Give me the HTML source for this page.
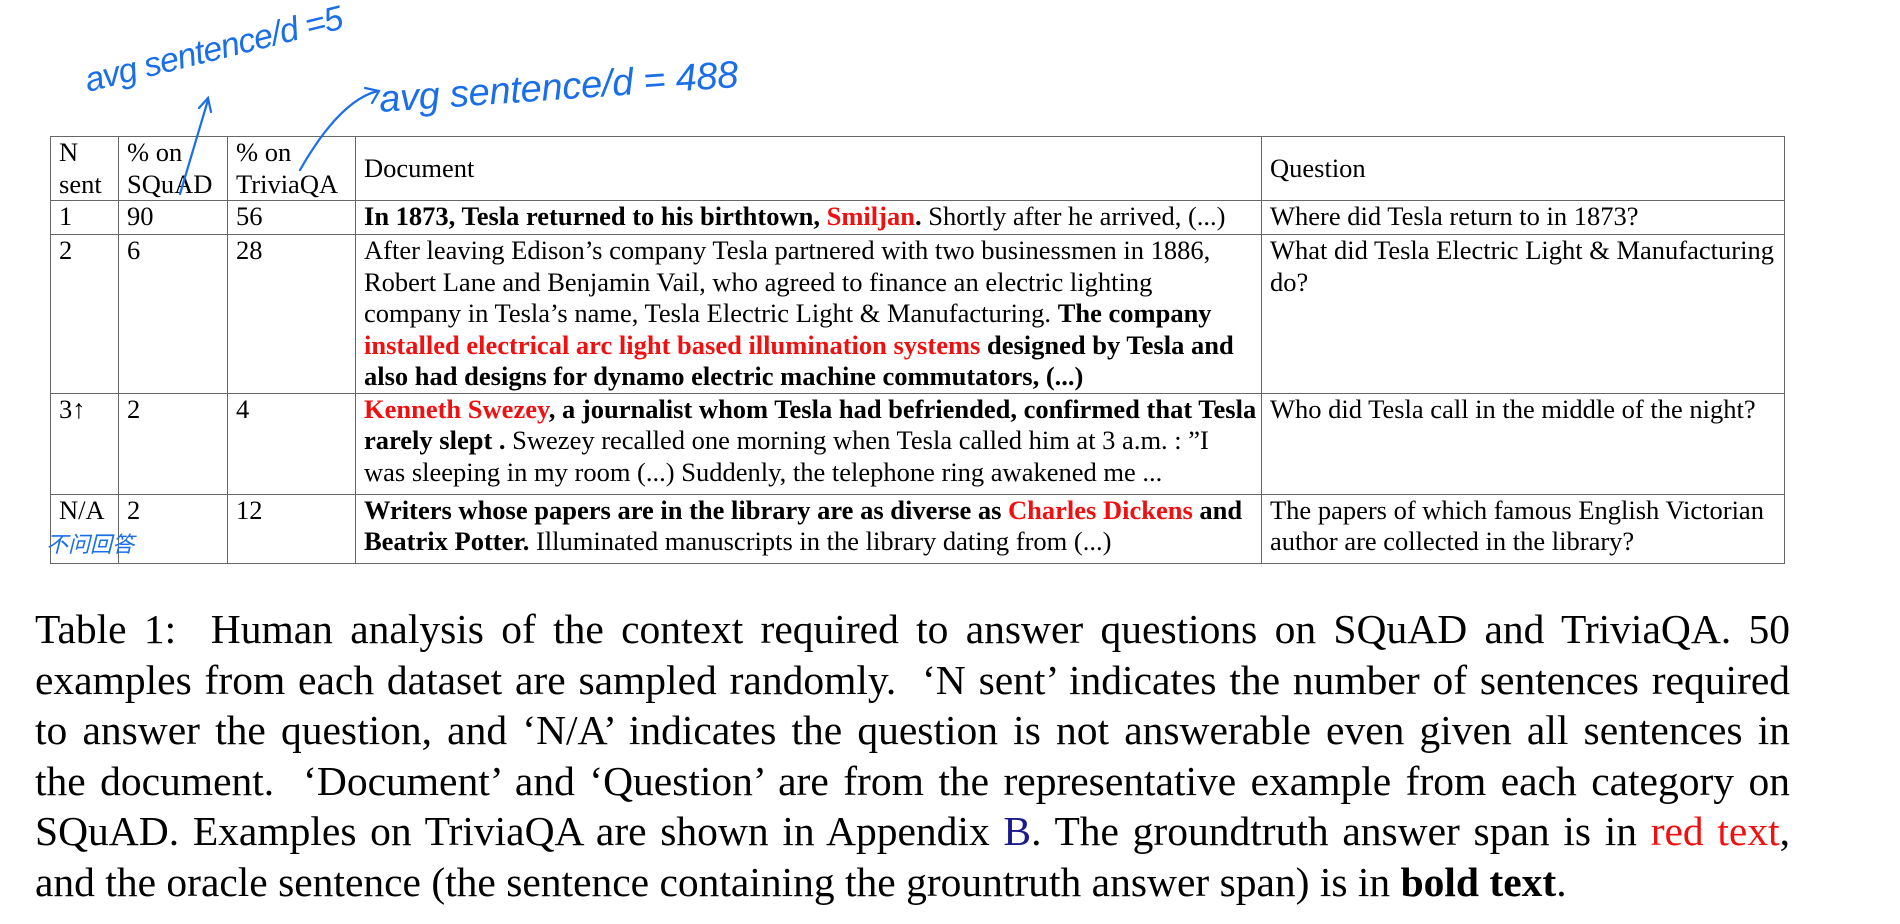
<!DOCTYPE html>
<html><head><meta charset="utf-8"><style>
html,body{margin:0;padding:0;background:#fff;width:1900px;height:924px;overflow:hidden;position:relative}
body{font-family:"Liberation Serif","Noto Serif CJK SC",serif;color:#000}
table{position:absolute;left:50px;top:136px;width:1734px;border-collapse:collapse;table-layout:fixed;font-size:26.5px;line-height:31.5px}
td{border:1.5px solid #666;vertical-align:top;padding:0 2px 0 8px;overflow:hidden;white-space:nowrap}
table{border:1.5px solid #333}
.r{color:#f01010}
b{font-weight:bold}
.cap{position:absolute;left:35px;top:604px;width:1755px;font-size:41.5px;line-height:50.5px}
.cap div{text-align:justify;text-align-last:justify;white-space:nowrap}
.cap div.l{text-align-last:left}
.hw{position:absolute;left:0;top:0}
</style></head><body>
<table>
<colgroup><col style="width:68px"><col style="width:109px"><col style="width:128px"><col style="width:906px"><col style="width:523px"></colgroup>
<tr style="height:64px"><td>N<br>sent</td><td>% on<br>SQuAD</td><td>% on<br>TriviaQA</td><td style="vertical-align:middle">Document</td><td style="vertical-align:middle">Question</td></tr>
<tr style="height:34px"><td>1</td><td>90</td><td>56</td><td><b>In 1873, Tesla returned to his birthtown, <span class="r">Smiljan</span>.</b> Shortly after he arrived, (...)</td><td>Where did Tesla return to in 1873?</td></tr>
<tr style="height:156px"><td>2</td><td>6</td><td>28</td><td>After leaving Edison’s company Tesla partnered with two businessmen in 1886,<br>Robert Lane and Benjamin Vail, who agreed to finance an electric lighting<br>company in Tesla’s name, Tesla Electric Light &amp; Manufacturing. <b>The company</b><br><b><span class="r">installed electrical arc light based illumination systems</span> designed by Tesla and</b><br><b>also had designs for dynamo electric machine commutators, (...)</b></td><td>What did Tesla Electric Light &amp; Manufacturing<br>do?</td></tr>
<tr style="height:101px"><td>3↑</td><td>2</td><td>4</td><td><b><span class="r">Kenneth Swezey</span>, a journalist whom Tesla had befriended, confirmed that Tesla</b><br><b>rarely slept .</b> Swezey recalled one morning when Tesla called him at 3 a.m. : ”I<br>was sleeping in my room (...) Suddenly, the telephone ring awakened me ...</td><td>Who did Tesla call in the middle of the night?</td></tr>
<tr style="height:69px"><td>N/A</td><td>2</td><td>12</td><td><b>Writers whose papers are in the library are as diverse as <span class="r">Charles Dickens</span> and</b><br><b>Beatrix Potter.</b> Illuminated manuscripts in the library dating from (...)</td><td>The papers of which famous English Victorian<br>author are collected in the library?</td></tr>
</table>
<svg class="hw" width="1900" height="600" viewBox="0 0 1900 600">
<g fill="#1a6fe8" font-family="Liberation Sans, sans-serif" font-style="italic">
<text x="88" y="92" font-size="34" transform="rotate(-14 88 92)" textLength="265">avg sentence/d =5</text>
<text x="380" y="112" font-size="38" transform="rotate(-4 380 112)" textLength="360">avg sentence/d = 488</text>
<text x="46" y="552" font-size="22" font-family="Noto Sans CJK SC, sans-serif">不问回答</text>
</g>
<g fill="none" stroke="#1a6fe8" stroke-width="2.2" stroke-linecap="round">
<path d="M180 194 Q196 140 208 100"/><path d="M199 108 L208 98 L211 112"/>
<path d="M300 170 Q340 100 378 91"/><path d="M365 88 L379 91 L372 103"/>
</g>
</svg>
<div class="cap">
<div>Table 1: &nbsp;Human analysis of the context required to answer questions on SQuAD and TriviaQA. 50</div>
<div>examples from each dataset are sampled randomly. &nbsp;‘N sent’ indicates the number of sentences required</div>
<div>to answer the question, and ‘N/A’ indicates the question is not answerable even given all sentences in</div>
<div>the document. &nbsp;‘Document’ and ‘Question’ are from the representative example from each category on</div>
<div>SQuAD. Examples on TriviaQA are shown in Appendix <span style="color:#1a1a8c">B</span>. The groundtruth answer span is in <span class="r">red text</span>,</div>
<div class="l">and the oracle sentence (the sentence containing the grountruth answer span) is in <b>bold text</b>.</div>
</div>
</body></html>
